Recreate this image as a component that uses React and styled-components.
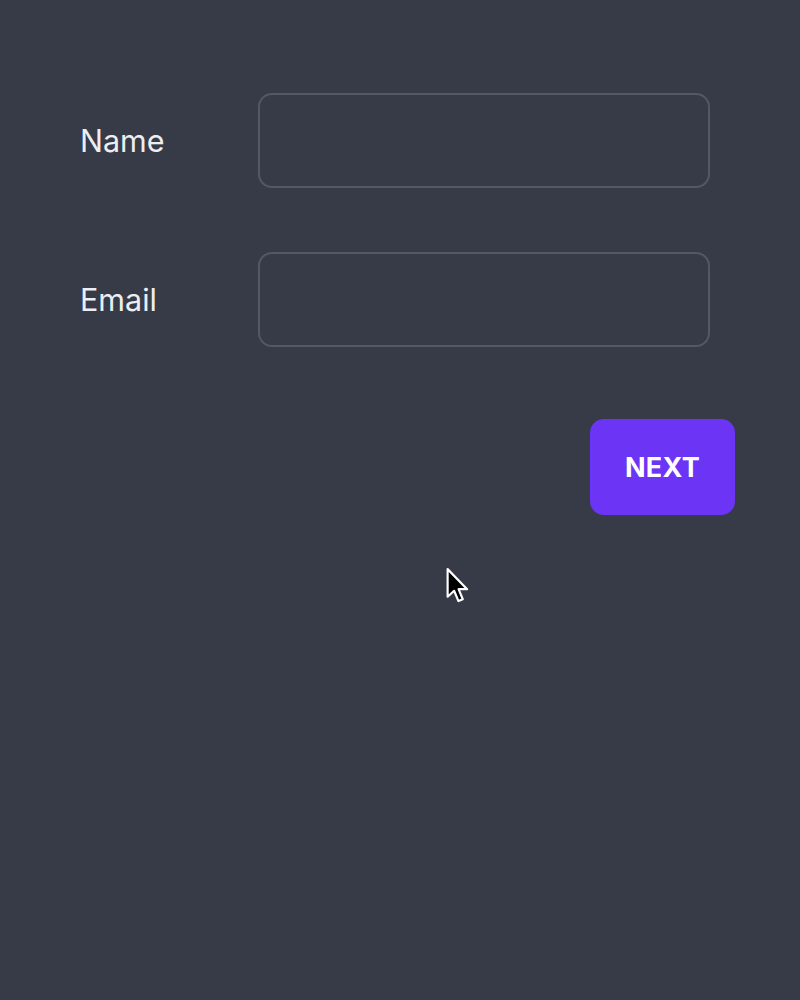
import React from "react";
import styled, { createGlobalStyle } from "styled-components";

const Global = createGlobalStyle`
  html, body { margin: 0; padding: 0; background: #373b47; }
  body { font-family: Inter, "Noto Sans", sans-serif; }
`;

const Page = styled.div`
  position: relative;
  width: 800px;
  height: 1000px;
  background: #373b47;
  box-sizing: border-box;
  padding: 93px 0 0 80px;
  display: flex;
  flex-direction: column;
`;

const Form = styled.form`
  display: flex;
  flex-direction: column;
  gap: 64px;
`;

const Row = styled.div`
  display: flex;
  align-items: center;
`;

const Label = styled.label`
  width: 178px;
  font-size: 30.5px;
  color: #eceef2;
  font-weight: 400;
`;

const Input = styled.input`
  width: 452px;
  height: 95px;
  box-sizing: border-box;
  border: 2px solid #535865;
  border-radius: 14px;
  background: transparent;
  color: #fff;
  font-size: 28px;
  padding: 0 20px;
  outline: none;
  font-family: inherit;
`;

const Actions = styled.div`
  display: flex;
  padding-left: 510px;
  margin-top: 72px;
`;

const Button = styled.button`
  width: 145px;
  height: 96px;
  border: none;
  border-radius: 14px;
  background: #6c35f5;
  color: #fff;
  font-family: inherit;
  font-size: 27px;
  font-weight: 700;
  letter-spacing: 0.3px;
  cursor: pointer;
`;

const Cursor = styled.svg`
  position: absolute;
  left: 446px;
  top: 567px;
`;

export default function App() {
  return (
    <>
      <Global />
      <Page>
        <Form onSubmit={(e) => e.preventDefault()}>
          <Row>
            <Label htmlFor="name">Name</Label>
            <Input id="name" type="text" />
          </Row>
          <Row>
            <Label htmlFor="email">Email</Label>
            <Input id="email" type="email" />
          </Row>
        </Form>
        <Actions>
          <Button type="button">NEXT</Button>
        </Actions>
        <Cursor width="26" height="40" viewBox="0 0 24 36">
          <path
            d="M1.5 1.5 L1.5 27 L7.5 21.5 L11.5 31 L15.5 29.3 L11.6 20 L19.5 20 Z"
            fill="#000"
            stroke="#fff"
            strokeWidth="2"
            strokeLinejoin="round"
          />
        </Cursor>
      </Page>
    </>
  );
}
